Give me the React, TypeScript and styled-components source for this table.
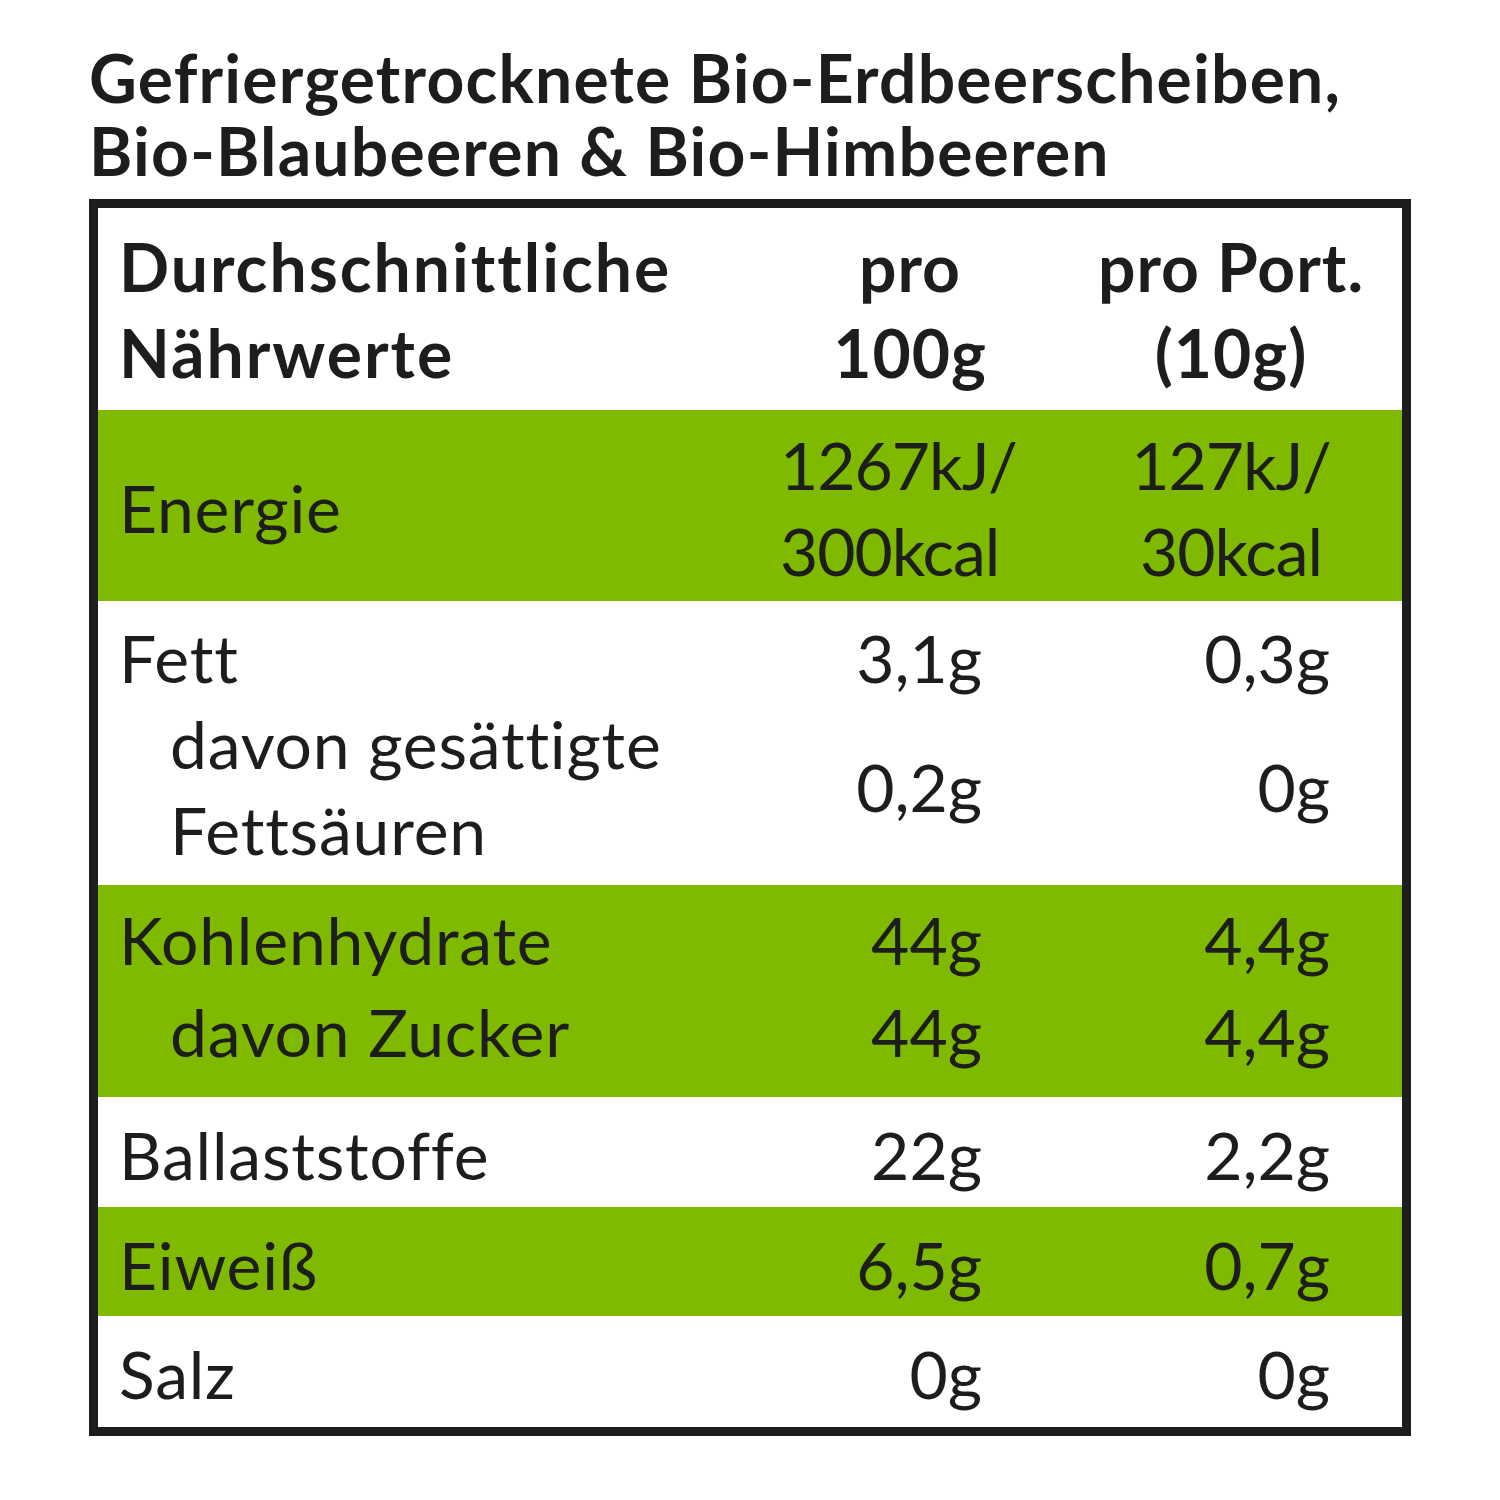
import React from "react";
import styled, { createGlobalStyle } from "styled-components";

const Global = createGlobalStyle`
  html, body { margin: 0; padding: 0; background: #ffffff; }
  body { font-family: Lato, "Noto Sans", sans-serif; color: #1d1d1b; }
`;

const GREEN = "#7fba00";

const Page = styled.div`
  width: 1500px;
  height: 1500px;
  box-sizing: border-box;
  padding: 41px 0 0 89px;
`;

const Title = styled.h1`
  margin: 0 0 12px 0;
  font-size: 66px;
  line-height: 73px;
  font-weight: 700;
  letter-spacing: 1.2px;
  color: #1d1d1b;
  white-space: nowrap;
`;

const Table = styled.div`
  width: 1322px;
  box-sizing: border-box;
  border: 9px solid #1d1d1b;
  display: flex;
  flex-direction: column;
`;

const Band = styled.div<{ $green?: boolean; $top: number; $bottom: number }>`
  background: ${(p) => (p.$green ? GREEN : "#ffffff")};
  padding: ${(p) => p.$top}px 0 ${(p) => p.$bottom}px;
  display: flex;
  flex-direction: column;
`;

const Row = styled.div<{ $lh?: number; $bold?: boolean }>`
  display: grid;
  grid-template-columns: 662px 300px 342px;
  align-items: center;
  font-size: 66px;
  line-height: ${(p) => p.$lh ?? 86}px;
  font-weight: ${(p) => (p.$bold ? 700 : 400)};
  white-space: nowrap;
`;

const Label = styled.div<{ $indent?: boolean; $bold?: boolean }>`
  padding-left: ${(p) => (p.$indent ? 72 : 21)}px;
  letter-spacing: ${(p) => (p.$bold ? 2 : 0.8)}px;
`;

const Col2 = styled.div<{ $align?: "left" | "right" | "center"; $spacing?: number }>`
  text-align: ${(p) => p.$align ?? "right"};
  letter-spacing: ${(p) => p.$spacing ?? 0}px;
  padding-left: ${(p) => (p.$align === "left" ? 20 : 0)}px;
  padding-right: ${(p) => (p.$align === "right" || !p.$align ? 78 : 0)}px;
`;

const Col3 = styled.div<{ $align?: "left" | "right" | "center"; $spacing?: number }>`
  text-align: ${(p) => p.$align ?? "right"};
  letter-spacing: ${(p) => p.$spacing ?? 0}px;
  padding-right: ${(p) => (p.$align === "right" || !p.$align ? 72 : 0)}px;
`;

export default function App() {
  return (
    <>
      <Global />
      <Page>
        <Title>
          Gefriergetrocknete Bio-Erdbeerscheiben,
          <br />
          Bio-Blaubeeren &amp; Bio-Himbeeren
        </Title>
        <Table>
          <Band $top={16} $bottom={14}>
            <Row $bold>
              <Label $bold>
                Durchschnittliche
                <br />
                Nährwerte
              </Label>
              <Col2 $align="center" $spacing={1}>
                pro
                <br />
                100g
              </Col2>
              <Col3 $align="center" $spacing={1}>
                pro Port.
                <br />
                (10g)
              </Col3>
            </Row>
          </Band>
          <Band $green $top={12} $bottom={7}>
            <Row>
              <Label>Energie</Label>
              <Col2 $align="left" $spacing={-1}>
                1267kJ/
                <br />
                300kcal
              </Col2>
              <Col3 $align="center" $spacing={-1}>
                127kJ/
                <br />
                30kcal
              </Col3>
            </Row>
          </Band>
          <Band $top={14} $bottom={12}>
            <Row>
              <Label>Fett</Label>
              <Col2>3,1g</Col2>
              <Col3>0,3g</Col3>
            </Row>
            <Row>
              <Label $indent>
                davon gesättigte
                <br />
                Fettsäuren
              </Label>
              <Col2>0,2g</Col2>
              <Col3>0g</Col3>
            </Row>
          </Band>
          <Band $green $top={9} $bottom={19}>
            <Row $lh={92}>
              <Label>Kohlenhydrate</Label>
              <Col2>44g</Col2>
              <Col3>4,4g</Col3>
            </Row>
            <Row $lh={92}>
              <Label $indent>davon Zucker</Label>
              <Col2>44g</Col2>
              <Col3>4,4g</Col3>
            </Row>
          </Band>
          <Band $top={15} $bottom={9}>
            <Row>
              <Label>Ballaststoffe</Label>
              <Col2>22g</Col2>
              <Col3>2,2g</Col3>
            </Row>
          </Band>
          <Band $green $top={15} $bottom={8}>
            <Row>
              <Label>Eiweiß</Label>
              <Col2>6,5g</Col2>
              <Col3>0,7g</Col3>
            </Row>
          </Band>
          <Band $top={15} $bottom={10}>
            <Row>
              <Label>Salz</Label>
              <Col2>0g</Col2>
              <Col3>0g</Col3>
            </Row>
          </Band>
        </Table>
      </Page>
    </>
  );
}
